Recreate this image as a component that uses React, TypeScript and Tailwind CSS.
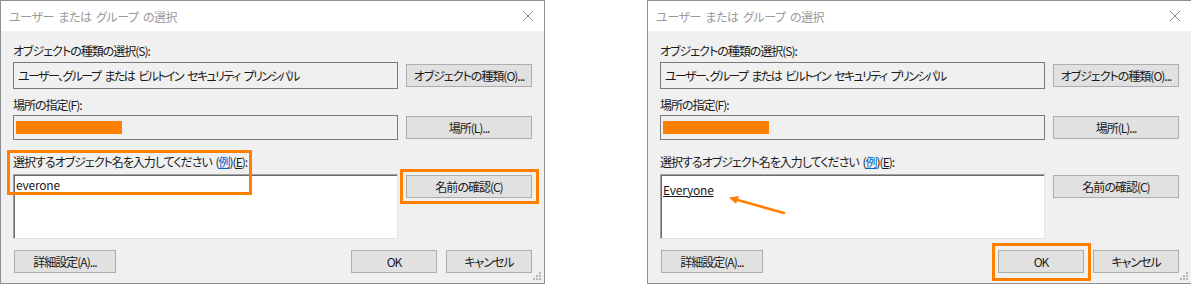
import React from "react";

type DialogProps = {
  done?: boolean;
};

const jp = "font-['Noto_Sans_CJK_JP','Noto_Sans',sans-serif] [font-feature-settings:'palt'] text-[12px] leading-4 tracking-[-1px] [word-spacing:2px]";

function WinButton({ label, className = "" }: { label: string; className?: string }) {
  return (
    <button
      className={`flex h-[23px] items-center justify-center border border-[#adadad] bg-[#e1e1e1] text-[#1a1a1a] ${className}`}>
      {label}
    </button>
  );
}

function Grip() {
  return (
    <svg width="9" height="9" viewBox="0 0 9 9" className="absolute bottom-[2px] right-[2px]">
      {[
        [6, 0],
        [6, 3],
        [3, 3],
        [6, 6],
        [3, 6],
        [0, 6],
      ].map(([x, y]) => (
        <rect key={`${x}-${y}`} x={x} y={y} width="2" height="2" fill="#b5b5b5" />
      ))}
    </svg>
  );
}

function Dialog({ done = false }: DialogProps) {
  return (
    <div className={`relative flex h-[284px] w-[545px] shrink-0 flex-col border border-[#8f8f8f] bg-[#f0f0f0] ${jp}`}>
      {/* title bar */}
      <div className="flex h-[30px] items-center justify-between bg-white pl-2 pr-[9px] text-[#9a9a9a]">
        <span className="pt-[1px] tracking-[-0.4px]">ユーザー または グループ の選択</span>
        <svg width="12" height="12" viewBox="0 0 12 12" className="mr-[1px]">
          <path d="M1 1 L11 11 M11 1 L1 11" stroke="#8a8a8a" strokeWidth="1" />
        </svg>
      </div>

      <div className="flex flex-1 flex-col px-3 text-[#1a1a1a]">
        <div className="mt-3 h-4">オブジェクトの種類の選択(S):</div>
        <div className="mt-[3px] flex items-center gap-2">
          <div className="flex h-[27px] w-[385px] items-center border border-[#7a7a7a] pl-[4px] tracking-[-1.6px] [word-spacing:3px]">
            ユーザー、グループ または ビルトイン セキュリティ プリンシパル
          </div>
          <WinButton label="オブジェクトの種類(O)..." className="w-[126px]" />
        </div>

        <div className="mt-2 h-4">場所の指定(F):</div>
        <div className="mt-[2px] flex items-center gap-2">
          <div className="flex h-[25px] w-[385px] items-center border border-[#7a7a7a] pl-[2px]">
            <div className="h-[13px] w-[106px] bg-[#ff8000]" />
          </div>
          <WinButton label="場所(L)..." className="w-[126px]" />
        </div>

        <div className="mt-[14px] h-4">
          選択するオブジェクト名を入力してください (
          <span className="text-[#0066cc] underline">例</span>)(<span className="underline">E</span>):
        </div>
        <div className="mt-1 flex items-start gap-2">
          <div className="h-[65px] w-[385px] border border-b-[#e3e3e3] border-l-[#a0a0a0] border-r-[#e3e3e3] border-t-[#a0a0a0] bg-white">
            <div className="h-full border-l border-t border-[#6a6a6a] tracking-[-0.2px]">
              {done ? (
                <div className="pl-[1px] pt-[6px] underline">Everyone</div>
              ) : (
                <div className="pl-[1px] pt-[1px]">everone</div>
              )}
            </div>
          </div>
          <WinButton label="名前の確認(C)" className="mt-[1px] w-[126px]" />
        </div>

        <div className="mt-[11px] flex items-center">
          <WinButton label="詳細設定(A)..." className="ml-[1px] w-[102px]" />
          <WinButton label="OK" className="ml-auto w-[86px]" />
          <WinButton label="キャンセル" className="ml-[9px] w-[86px]" />
        </div>
      </div>

      <Grip />

      {!done && (
        <>
          <div className="pointer-events-none absolute left-[6px] top-[149px] h-[45px] w-[245px] border-[3px] border-[#ff8000]" />
          <div className="pointer-events-none absolute left-[399px] top-[168px] h-[35px] w-[139px] border-[3px] border-[#ff8000]" />
        </>
      )}
      {done && (
        <>
          <div className="pointer-events-none absolute left-[344px] top-[242px] h-[38px] w-[99px] border-[3px] border-[#ff8000]" />
          <svg className="pointer-events-none absolute left-[76px] top-[190px]" width="70" height="30" viewBox="0 0 70 30">
            <path d="M60 22 L10 8" stroke="#ff8000" strokeWidth="2.5" strokeLinecap="round" />
            <path d="M5 6.5 L15 5 L12 13 Z" fill="#ff8000" />
          </svg>
        </>
      )}
    </div>
  );
}

export default function App() {
  return (
    <div className="flex h-[285px] w-[1191px] gap-[102px] overflow-hidden bg-white">
      <Dialog />
      <Dialog done />
    </div>
  );
}
